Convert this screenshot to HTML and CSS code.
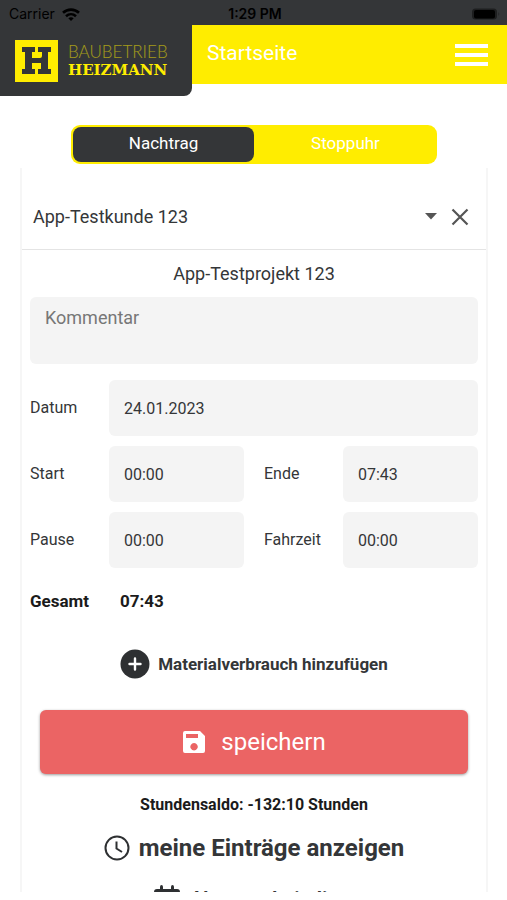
FILE: index.html
```html
<!DOCTYPE html>
<html lang="de">
<head>
<meta charset="utf-8">
<meta name="viewport" content="width=device-width, initial-scale=1">
<title>Startseite</title>
<link rel="stylesheet" href="styles.css">
</head>
<body>
<div class="app">
  <div class="statusbar">
    <div class="carrier">Carrier
      <svg width="18" height="13" viewBox="0 0 18 13" aria-hidden="true"><g fill="none" stroke="#000" stroke-width="2.6"><path d="M1 4.8C5.500.5 12.500.5 17 4.800"/><path d="M4 8.200C7 5.500 11 5.500 14 8.200"/></g><path d="M9 13 6.300 10.300Q9 8 11.700 10.300Z"/></svg>
    </div>
    <div class="clock">1:29 PM</div>
    <svg class="battery" width="30" height="14" viewBox="0 0 30 14" aria-hidden="true"><rect x="1" y="1.500" width="25" height="11" rx="3.500" fill="#1d1e1f"/><rect x="3" y="3" width="21" height="8.500" rx="2"/><path d="M27.500 5v4q1.500-2 0-4" fill="#1d1e1f"/></svg>
  </div>
  <header class="header">
    <div class="brand">
      <svg width="43" height="42" viewBox="0 0 43 42" aria-hidden="true"><path fill="#ffed00" d="M0 0h43v42H0z"/><path fill="#343638" d="M7 7h13v5h-3v6h8q2 0 2-2v-4h-4V7h13v5h-3v17h3v5H23v-5h3v-6h-9v6h3v5H7v-5h3V12H7z"/></svg>
      <div class="brand-name"><span class="brand-top">BAUBETRIEB</span><span class="brand-bottom">HEIZMANN</span></div>
    </div>
    <div class="titlebar">
      <h1>Startseite</h1>
      <button class="menu" aria-label="Menü"><span></span><span></span><span></span></button>
    </div>
  </header>
  <nav class="tabs">
    <button class="tab active">Nachtrag</button>
    <button class="tab">Stoppuhr</button>
  </nav>
  <main class="panel">
    <div class="customer">
      <button class="customer-name">App-Testkunde 123
        <svg width="12" height="7" viewBox="0 0 12 7" aria-hidden="true"><path fill="#555" d="M0 0h12L6 6.500z"/></svg>
      </button>
      <button class="clear" aria-label="Auswahl löschen"><svg width="18" height="18" viewBox="0 0 18 18" aria-hidden="true"><path d="m1.500 1.500 15 15m0-15-15 15" stroke="#555" stroke-width="2.200"/></svg></button>
    </div>
    <form class="form">
      <h2>App-Testprojekt 123</h2>
      <textarea class="field comment" aria-label="Kommentar" placeholder="Kommentar"></textarea>
      <div class="grid">
        <label for="datum">Datum</label><input class="field wide" id="datum" value="24.01.2023">
        <label for="start">Start</label><input class="field" id="start" value="00:00">
        <label class="second" for="ende">Ende</label><input class="field" id="ende" value="07:43">
        <label for="pause">Pause</label><input class="field" id="pause" value="00:00">
        <label class="second" for="fahrzeit">Fahrzeit</label><input class="field" id="fahrzeit" value="00:00">
      </div>
      <div class="total"><span>Gesamt</span><span>07:43</span></div>
      <button type="button" class="material">
        <svg width="30" height="30" viewBox="0 0 30 30" aria-hidden="true"><circle cx="15" cy="15" r="14.500" fill="#2e3032"/><path d="M15 9.500v11M9.500 15h11" stroke="#fff" stroke-width="2.400" stroke-linecap="round"/></svg>
        Materialverbrauch hinzufügen
      </button>
      <button type="button" class="save">
        <svg width="24" height="24" viewBox="0 0 24 24" aria-hidden="true"><path fill="#fff" fill-rule="evenodd" d="M3 1h15l5 5v15q0 2-2 2H3q-2 0-2-2V3q0-2 2-2m1 3v4h12V4zm8 9a3.700 3.700 0 1 0 .1 0z"/></svg>
        speichern
      </button>
      <p class="saldo">Stundensaldo: -132:10 Stunden</p>
      <a class="link" href="#eintraege">
        <svg width="26" height="26" viewBox="0 0 26 26" aria-hidden="true"><g fill="none" stroke="#2e3032" stroke-width="2"><circle cx="13" cy="13" r="11.500"/><path d="M12.500 6.500v7l5.500 3.500"/></g></svg>
        meine Einträge anzeigen
      </a>
      <a class="link small" href="#abwesenheit">
        <svg width="28" height="28" viewBox="0 0 28 28" aria-hidden="true"><path fill="#2e3032" d="M1 9V7q0-3 3-3h3V2q0-2 1.500-2T10 2v2h8V2q0-2 1.500-2T21 2v2h3q3 0 3 3v2zm0 2h26v14q0 3-3 3H4q-3 0-3-3z"/></svg>
        Abwesenheitsliste
      </a>
    </form>
  </main>
</div>
</body>
</html>
```
FILE: styles.css
```css
* { box-sizing: border-box; }
body { margin: 0; background: #fff; color: #343638; font-family: Roboto, sans-serif; font-size: 17px; line-height: 24px; }
button, input, textarea { font: inherit; color: inherit; border: 0; margin: 0; padding: 0; background: none; }
h1, h2, p { margin: 0; font-weight: 400; }
svg { flex: none; display: block; }
.app { height: 100vh; padding-bottom: 8px; display: flex; flex-direction: column; overflow: hidden; }
.statusbar { flex: none; height: 25px; padding: 2px 6px 0 9px; display: grid; grid-template-columns: 1fr auto 1fr; align-items: center; background: #343638; color: #000; font-family: Inter, sans-serif; font-size: 14px; }
.carrier { display: flex; align-items: center; gap: 7px; }
.clock { font-weight: 600; }
.battery { justify-self: end; }
.header { flex: none; display: flex; align-items: flex-start; }
.brand { width: 192px; height: 71px; padding: 15px; display: flex; gap: 10px; background: #343638; border-radius: 0 0 8px 0; }
.brand-name { display: flex; flex-direction: column; padding-top: 3px; color: #ffed00; }
.brand-top { font: 300 17px/18px Lato, sans-serif; opacity: .55; }
.brand-bottom { font: 700 15px/18px "DejaVu Serif", serif; }
.titlebar { flex: 1; height: 59px; padding: 0 19px 0 15px; display: flex; align-items: center; justify-content: space-between; background: #ffed00; color: #fff; }
h1 { font-size: 21px; padding-bottom: 3px; }
.menu { width: 33px; display: grid; gap: 5px; }
.menu span { height: 4px; background: #fff; }
.tabs { flex: none; display: grid; grid-template-columns: 1fr 1fr; margin: 29px 70px 0 71px; height: 39px; background: #ffed00; border-radius: 9px; }
.tab { color: #fff; padding-bottom: 3px; }
.tab.active { margin: 2px 0 2px 2px; border-radius: 8px; background: #343638; }
.panel { flex: 1; min-height: 0; margin: 4px 19px 0 20px; overflow: hidden; border: solid #f6f6f6; border-width: 0 2px; }
.customer { height: 82px; display: flex; align-items: center; gap: 14px; padding: 16px 17px 0 11px; border-bottom: 1px solid #e4e4e4; font-size: 18px; }
.customer-name { flex: 1; display: flex; align-items: center; justify-content: space-between; text-align: left; }
.form { padding: 12px 8px 0; display: flex; flex-direction: column; }
h2 { font-size: 18px; text-align: center; }
.field { min-width: 0; width: 100%; height: 56px; padding: 0 15px; border-radius: 6px; background: #f4f4f4; }
.comment { height: 67px; margin-top: 11px; padding: 9px 15px; font-size: 18px; resize: none; }
.comment::placeholder { color: #777; }
.grid { display: grid; grid-template-columns: 79px 1fr 99px 1fr; gap: 10px 0; margin-top: 16px; align-items: center; font-size: 16px; }
.wide { grid-column: span 3; }
.second { padding-left: 20px; }
.total { display: grid; grid-template-columns: 90px 1fr; margin-top: 21px; color: #1b1b1b; font-weight: 700; }
.material { align-self: center; display: flex; align-items: center; gap: 8px; margin-top: 36px; font-weight: 700; }
.save { height: 64px; margin: 31px 10px 0; display: flex; align-items: center; justify-content: center; gap: 15px; border-radius: 6px; background: #eb6464; color: #fff; font-size: 24px; box-shadow: 0 1px 3px #0006; }
.saldo { margin-top: 19px; text-align: center; color: #1b1b1b; font-size: 16px; font-weight: 700; }
.link { margin-top: 14px; display: flex; align-items: center; justify-content: center; gap: 9px; color: inherit; text-decoration: none; font-size: 24px; line-height: 34px; font-weight: 700; }
.link.small { margin-top: 17px; font-size: 20px; }
```
